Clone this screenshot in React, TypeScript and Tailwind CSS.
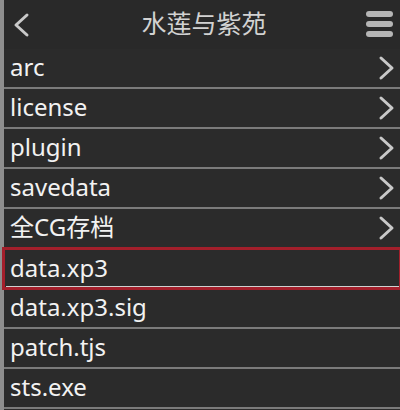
const items = [
  { name: "arc", dir: true },
  { name: "license", dir: true },
  { name: "plugin", dir: true },
  { name: "savedata", dir: true },
  { name: "全CG存档", dir: true },
  { name: "data.xp3", dir: false, selected: true },
  { name: "data.xp3.sig", dir: false },
  { name: "patch.tjs", dir: false },
  { name: "sts.exe", dir: false },
];

const Chevron = ({ left = false }: { left?: boolean }) => (
  <svg width="18" height="26" viewBox="0 0 18 26" fill="none">
    <path
      d={left ? "M15 3 L4 13 L15 23" : "M3 3 L14 13 L3 23"}
      stroke="#c9c9c9"
      strokeWidth="3"
      strokeLinecap="round"
      strokeLinejoin="round"
    />
  </svg>
);

export default function App() {
  return (
    <div
      className="flex w-[400px] h-[410px] overflow-hidden bg-[#2b2b2b]"
      style={{ fontFamily: '"Noto Sans", "Noto Sans CJK SC", sans-serif' }}
    >
      <div className="w-[4px] shrink-0 bg-[#8e8e8e]" />
      <div className="flex flex-col flex-1">
        {/* header */}
        <div className="h-[49px] shrink-0 flex items-center justify-between bg-[#292929] pl-[8px] pr-[7px]">
          <Chevron left />
          <span className="text-[25px] text-[#d2d2d2] leading-none ml-[12px] -mt-[2px]">
            水莲与紫苑
          </span>
          <div className="flex flex-col gap-[4px] -mt-[2px]">
            <div className="w-[27px] h-[6px] rounded-[3px] bg-[#b5b5b5]" />
            <div className="w-[27px] h-[6px] rounded-[3px] bg-[#b5b5b5]" />
            <div className="w-[27px] h-[6px] rounded-[3px] bg-[#b5b5b5]" />
          </div>
        </div>
        {/* list */}
        {items.map((it) => (
          <div key={it.name} className="shrink-0 relative">
            <div className="h-[38px] flex items-center justify-between pl-[6px] pr-[4px]">
              <span className="text-[24px] text-[#f2f2f2] leading-none -mt-[2px]">{it.name}</span>
              {it.dir && <Chevron />}
            </div>
            <div className="h-[2px] bg-[#7b7b7b]" />
            {it.selected && (
              <div className="absolute z-10 -top-[2px] -left-[2px] -right-[2px] -bottom-[1px] border-[3px] border-[#a31f2b] bg-[#2b2b2b] flex flex-col">
                <div className="flex-1 flex items-center pl-[5px]">
                  <span className="text-[24px] text-[#f2f2f2] leading-none -mt-[1px]">{it.name}</span>
                </div>
                <div className="h-[1px] ml-[1px] bg-[#d0d0d0]" />
              </div>
            )}
          </div>
        ))}
      </div>
    </div>
  );
}
